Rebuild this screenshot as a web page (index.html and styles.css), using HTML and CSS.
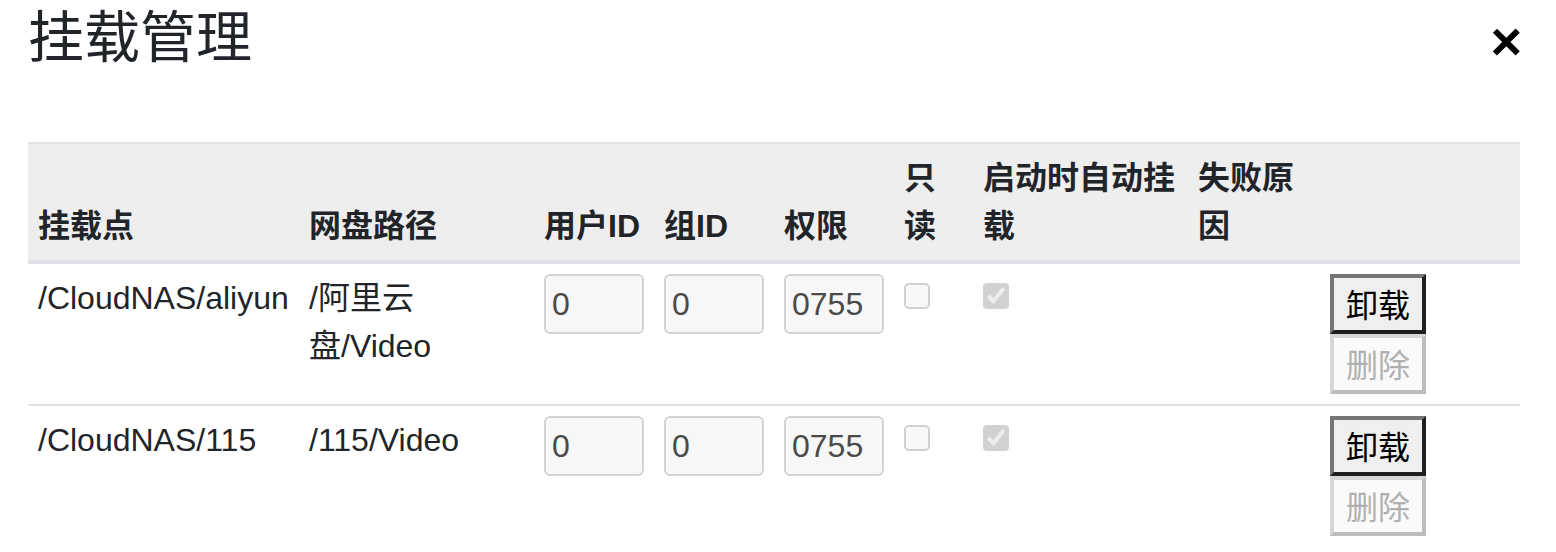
FILE: index.html
```html
<!DOCTYPE html>
<html lang="zh-CN">
<head>
<meta charset="utf-8">
<title>挂载管理</title>
<link rel="stylesheet" href="styles.css">
</head>
<body>
<div class="modal">
  <div class="modal-header">
    <h3 class="modal-title">挂载管理</h3>
    <button class="close" type="button" aria-label="Close">×</button>
  </div>
  <div class="modal-body">
    <table class="mounts">
      <colgroup>
        <col class="c-point"><col class="c-path"><col class="c-num"><col class="c-num"><col class="c-num"><col class="c-ro"><col class="c-auto"><col class="c-err"><col class="c-act">
      </colgroup>
      <thead>
        <tr>
          <th>挂载点</th><th>网盘路径</th><th>用户ID</th><th>组ID</th><th>权限</th><th>只读</th><th>启动时自动挂载</th><th>失败原因</th><th></th>
        </tr>
      </thead>
      <tbody>
        <tr>
          <td>/CloudNAS/aliyun</td>
          <td>/阿里云盘/Video</td>
          <td><input class="field" type="text" value="0" readonly></td>
          <td><input class="field" type="text" value="0" readonly></td>
          <td><input class="field" type="text" value="0755" readonly></td>
          <td><input class="check" type="checkbox" disabled></td>
          <td><input class="check" type="checkbox" checked disabled></td>
          <td></td>
          <td><button class="btn" type="button">卸载</button><button class="btn" type="button" disabled>删除</button></td>
        </tr>
        <tr>
          <td>/CloudNAS/115</td>
          <td>/115/Video</td>
          <td><input class="field" type="text" value="0" readonly></td>
          <td><input class="field" type="text" value="0" readonly></td>
          <td><input class="field" type="text" value="0755" readonly></td>
          <td><input class="check" type="checkbox" disabled></td>
          <td><input class="check" type="checkbox" checked disabled></td>
          <td></td>
          <td><button class="btn" type="button">卸载</button><button class="btn" type="button" disabled>删除</button></td>
        </tr>
      </tbody>
    </table>
  </div>
</div>
</body>
</html>
```

FILE: styles.css
```css
html, body {
  margin: 0;
  padding: 0;
  background: #fff;
}
body {
  font-family: "Liberation Sans", "Noto Sans CJK SC", sans-serif;
  font-size: 32px;
  line-height: 1.5;
  color: #212529;
}
.modal-header {
  display: flex;
  justify-content: space-between;
  align-items: flex-start;
  padding: 4px 34px 0 28px;
  height: 142px;
  box-sizing: border-box;
}
.modal-title {
  margin: 0;
  font-size: 56px;
  font-weight: 400;
  line-height: 1.2;
  color: #212529;
}
.close {
  margin-top: 10px;
  padding: 0;
  border: 0;
  background: transparent;
  font-family: "Liberation Sans", sans-serif;
  font-size: 54px;
  font-weight: 700;
  line-height: 1;
  color: #000;
  cursor: pointer;
}
.modal-body {
  padding: 0 36px 0 28px;
}
.mounts {
  width: 100%;
  table-layout: fixed;
  border-collapse: collapse;
}
.c-point { width: 271px; }
.c-path { width: 235px; }
.c-num { width: 120px; }
.c-ro { width: 79px; }
.c-auto { width: 215px; }
.c-err { width: 132px; }
.c-act { width: 200px; }
.mounts th,
.mounts td {
  padding: 10px;
  text-align: left;
  vertical-align: top;
  border-top: 2px solid #dee2e6;
}
.mounts thead th {
  vertical-align: bottom;
  background: #eeeeee;
  font-weight: 700;
  border-bottom: 4px solid #dee2e6;
  color: #212529;
}
.field {
  display: block;
  box-sizing: border-box;
  width: 100px;
  height: 60px;
  margin: 0;
  padding: 0 6px;
  border: 2px solid #d3d3d3;
  border-radius: 6px;
  background: #f7f7f7;
  font-family: "Liberation Sans", sans-serif;
  font-size: 32px;
  color: #4a4a4a;
  outline: none;
}
.check {
  display: block;
  margin: 4.5px 0 0 0;
  zoom: 2;
}
.btn {
  display: block;
  box-sizing: border-box;
  width: 96px;
  height: 60px;
  margin: 0;
  padding: 0 10px 2px;
  border-width: 4px;
  border-style: solid;
  border-color: #767676 #1f1f1f #1f1f1f #767676;
  background: #efefef;
  font-family: "Noto Sans CJK SC", sans-serif;
  font-size: 32px;
  line-height: 48px;
  color: #000;
  cursor: pointer;
}
.btn:disabled {
  border-color: #d6d6d6 #bdbdbd #bdbdbd #d6d6d6;
  background: #fafafa;
  color: #b0b0b0;
  cursor: default;
}
```
